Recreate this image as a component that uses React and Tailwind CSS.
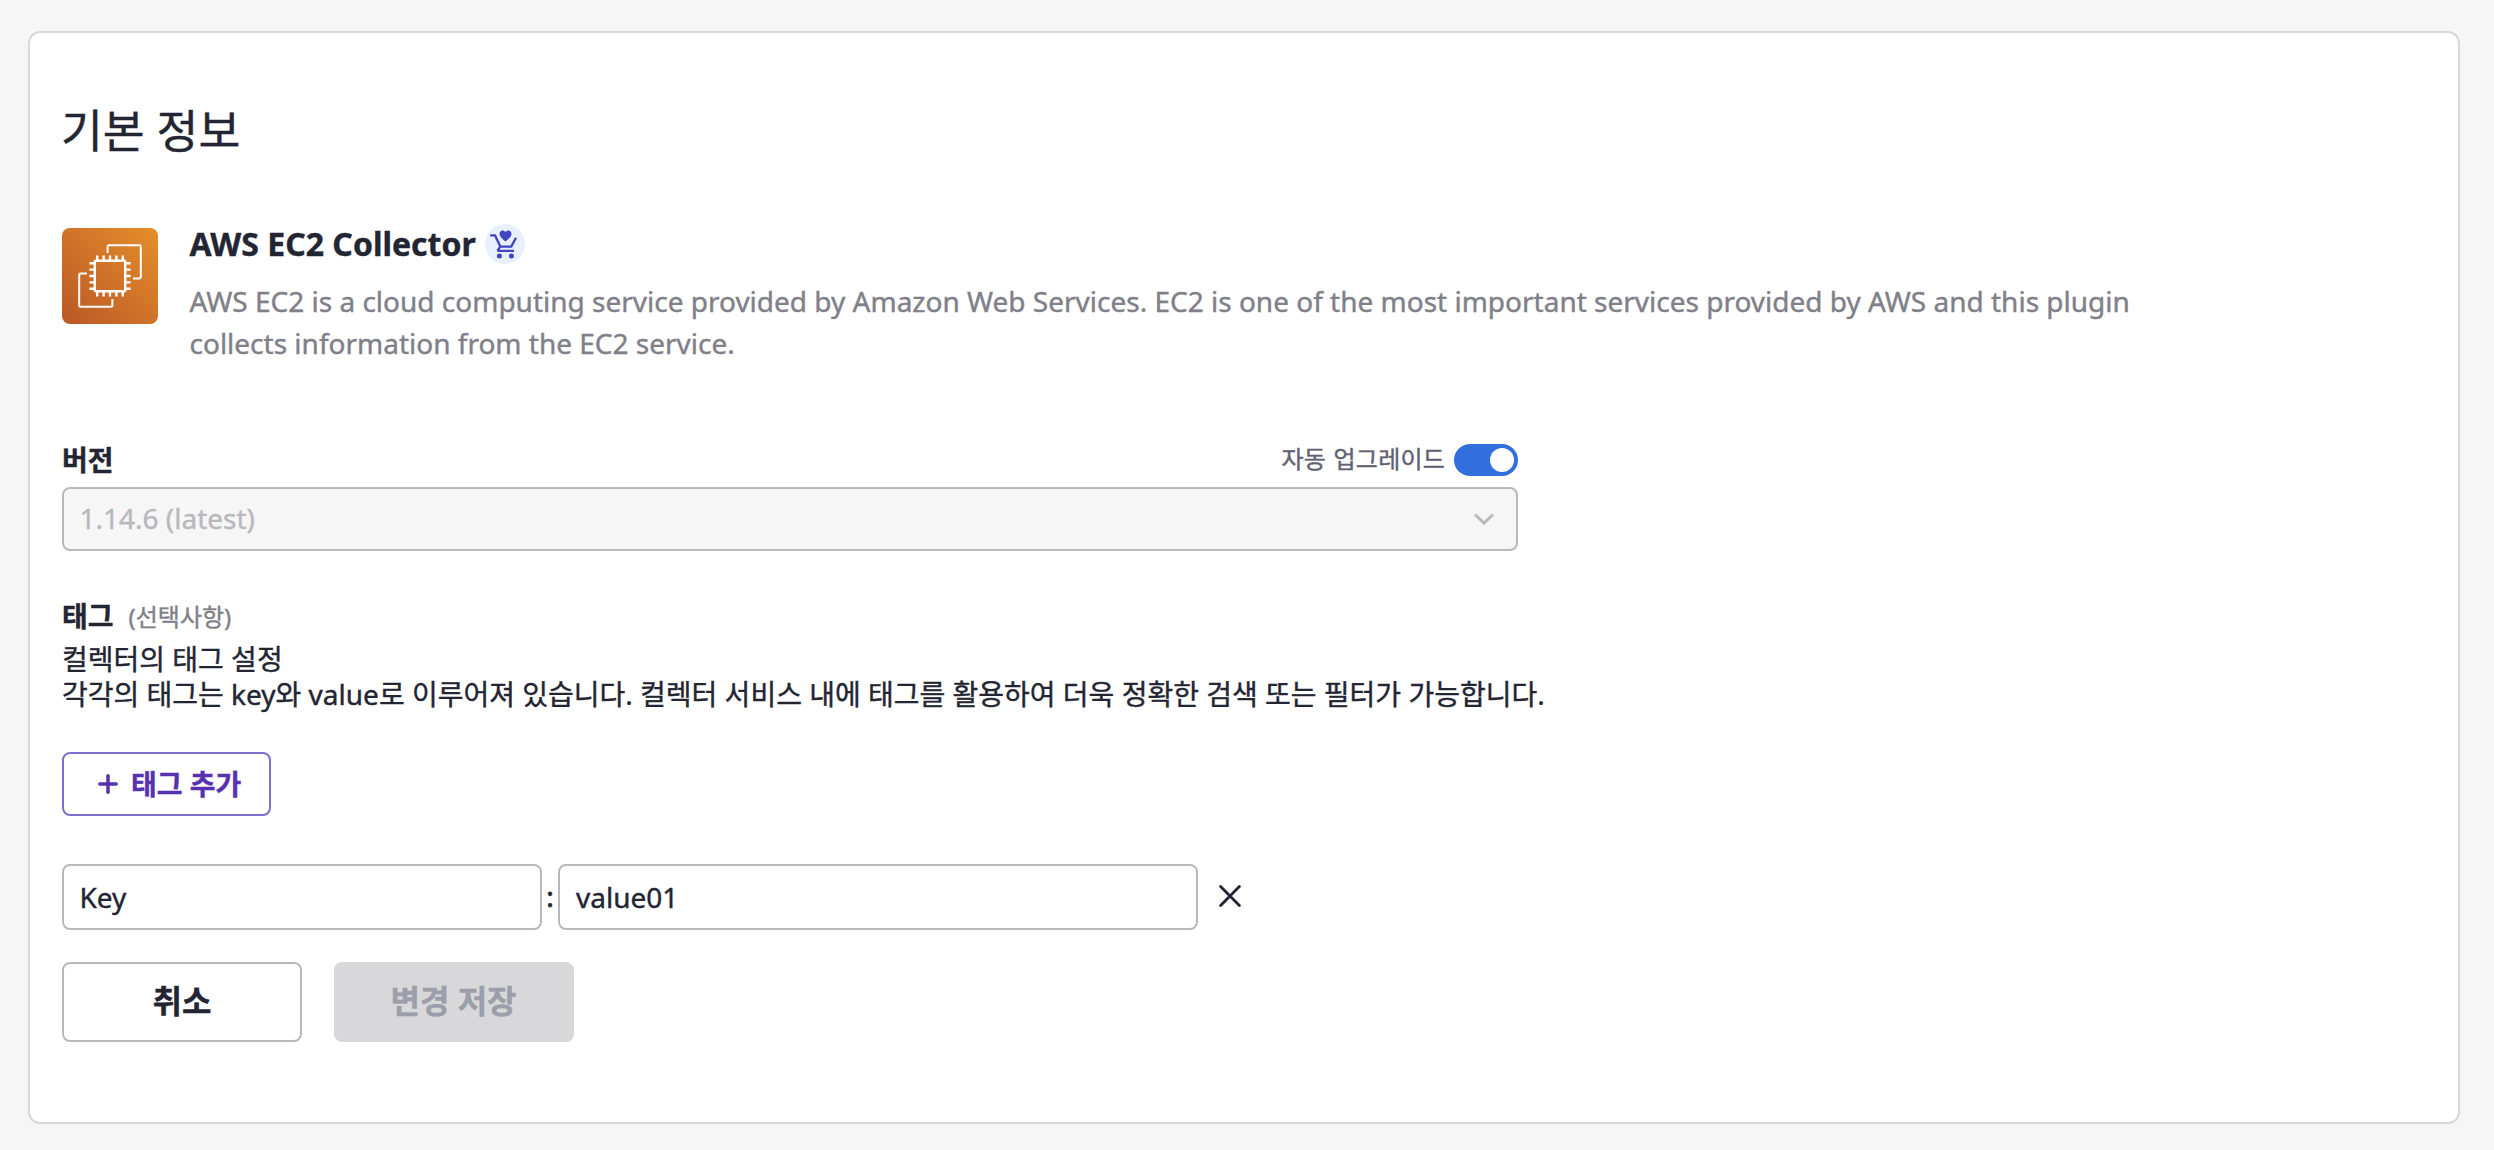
function Ec2Icon() {
  const pins = [35.2, 41.6, 48, 54.4, 60.8];
  return (
    <svg className="size-24 shrink-0 rounded-lg" viewBox="0 0 96 96" fill="none">
      <defs>
        <linearGradient id="ec2" x1="0" y1="96" x2="96" y2="0" gradientUnits="userSpaceOnUse">
          <stop offset="0" stopColor="#b95826" />
          <stop offset="1" stopColor="#e68e2b" />
        </linearGradient>
      </defs>
      <rect width="96" height="96" fill="url(#ec2)" />
      <g stroke="#fff" strokeWidth="2.4">
        <rect x="32.8" y="32.8" width="30.4" height="30.4" rx="0.6" />
        {pins.map((p) => (
          <path key={p} d={`M${p} 27.4v5M${p} 63.6v5M27.4 ${p}h5M63.6 ${p}h5`} />
        ))}
        <path
          strokeWidth="2"
          d="M45.6 25v-6.4a1.4 1.4 0 0 1 1.4-1.4h30.4a1.4 1.4 0 0 1 1.4 1.4v30.4a1.4 1.4 0 0 1-1.4 1.4H71M25 45.6h-6.4a1.4 1.4 0 0 0-1.4 1.4v30.4a1.4 1.4 0 0 0 1.4 1.4h30.4a1.4 1.4 0 0 0 1.4-1.4V71"
        />
      </g>
    </svg>
  );
}

function CartBadge() {
  return (
    <svg className="ml-[9px] size-10" viewBox="0 0 40 40" fill="none">
      <circle cx="20" cy="20" r="20" fill="#e8f0fe" />
      <g stroke="#3f45c0" strokeWidth="2.3" strokeLinejoin="round">
        <path d="M5.2 11.4h4.9l5.2 11.2h10.9l4.8-8.9" />
        <path d="M15.3 22.6l-2.3 3.2q-.3 1.1.9 1.1H29" />
      </g>
      <g fill="#3f45c0">
        <circle cx="14.4" cy="32" r="2.5" />
        <circle cx="26.4" cy="32" r="2.5" />
        <path d="M20.5 17.4c-3.6-2.9-6-4.9-6-7.7 0-1.9 1.4-3.3 3.1-3.3 1.2 0 2.2.6 2.9 1.5.7-.9 1.7-1.5 2.9-1.5 1.7 0 3.1 1.4 3.1 3.3 0 2.8-2.4 4.8-6 7.7z" />
      </g>
    </svg>
  );
}

export default function App() {
  return (
    <div className="h-[1150px] w-[2494px] bg-[#f6f6f6] pt-[31px] pl-7 font-['Noto_Sans','Noto_Sans_CJK_KR',sans-serif] text-[#232533] [-webkit-text-stroke:0.4px]">
      <main className="flex h-[1093px] w-[2432px] flex-col items-start rounded-xl border-2 border-[#d8d8d8] bg-white px-8 pt-[67px]">
        <h1 className="-ml-px text-[45.5px] leading-[60px]">기본 정보</h1>

        <section className="mt-16 flex gap-8">
          <div className="pt-1">
            <Ec2Icon />
          </div>
          <div className="-ml-[0.5px]">
            <div className="flex items-center">
              <h2 className="text-[32px] leading-10 font-bold">AWS EC2 Collector</h2>
              <CartBadge />
            </div>
            <p className="mt-4 w-[1960px] text-[28px] leading-[42px] text-[#808089]">
              AWS EC2 is a cloud computing service provided by Amazon Web Services. EC2 is one of the most important
              services provided by AWS and this plugin collects information from the EC2 service.
            </p>
          </div>
        </section>

        <section className="mt-[76px] w-[1456px]">
          <div className="flex h-10 items-center justify-between">
            <span className="text-[28px] leading-10 font-bold">버전</span>
            <div className="flex items-center gap-[9px]">
              <span className="pb-0.5 text-[24px] leading-9 tracking-[0.2px] text-[#5f6173] [word-spacing:1px]">
                자동 업그레이드
              </span>
              <button className="flex h-8 w-16 items-center justify-end rounded-full bg-[#316fdd] pr-1">
                <span className="size-6 rounded-full bg-white" />
              </button>
            </div>
          </div>
          <div className="mt-[7px] flex h-16 items-center justify-between rounded-lg border-2 border-[#b8b8bf] bg-[#f6f6f6] pr-[22px] pl-4 text-[28px] leading-9 text-[#b9b9bd]">
            <span className="-mt-0.5 -ml-[0.5px]">1.14.6 (latest)</span>
            <svg className="h-3 w-5" viewBox="0 0 20 12" fill="none" stroke="#b9b9bd" strokeWidth="3">
              <path d="M1 1.5l9 8.7 9-8.7" />
            </svg>
          </div>
        </section>

        <section className="mt-[45px] flex flex-col items-start">
          <div className="flex h-10 items-center gap-[15px]">
            <span className="text-[28px] leading-10 font-bold">태그</span>
            <span className="pt-0.5 text-[24px] leading-10 text-[#808089]">(선택사항)</span>
          </div>
          <p className="mt-1.5 text-[28px] leading-[35px] whitespace-nowrap">
            컬렉터의 태그 설정
            <br />
            각각의 태그는 key와 value로 이루어져 있습니다. 컬렉터 서비스 내에 태그를 활용하여 더욱 정확한 검색 또는 필터가
            가능합니다.
          </p>

          <button className="mt-10 flex h-16 w-[209px] items-center gap-[13px] rounded-lg border-2 border-[#7b70cc] pl-[34px] text-[28px] font-bold text-[#5632ae]">
            <svg className="size-5" viewBox="0 0 20 20" stroke="#5632ae" strokeWidth="3.5" strokeLinecap="round">
              <path d="M10 1.8v16.4M1.8 10h16.4" />
            </svg>
            <span className="leading-9 whitespace-nowrap">태그 추가</span>
          </button>

          <div className="mt-12 flex items-center text-[28px] leading-9">
            <div className="flex h-[66px] w-[480px] items-center rounded-lg border-2 border-[#b8b8bf] pl-[15.5px]">
              Key
            </div>
            <span className="w-4 pb-0.5 text-center [-webkit-text-stroke:0.8px]">:</span>
            <div className="flex h-[66px] w-[640px] items-center rounded-lg border-2 border-[#b8b8bf] pl-4">value01</div>
            <svg
              className="mb-0.5 ml-[21px] size-[22px]"
              viewBox="0 0 22 22"
              stroke="#232533"
              strokeWidth="2.8"
              strokeLinecap="round"
            >
              <path d="M1.6 1.6l18.8 18.8M20.4 1.6L1.6 20.4" />
            </svg>
          </div>

          <div className="mt-8 flex gap-8 text-[32px] leading-10 font-bold">
            <button className="h-20 w-60 rounded-lg border-2 border-[#b8b8bf] pb-0.5">취소</button>
            <button className="h-20 w-60 rounded-lg bg-[#d8d8da] pr-px pb-0.5 text-[#9c9ea9]">변경 저장</button>
          </div>
        </section>
      </main>
    </div>
  );
}
